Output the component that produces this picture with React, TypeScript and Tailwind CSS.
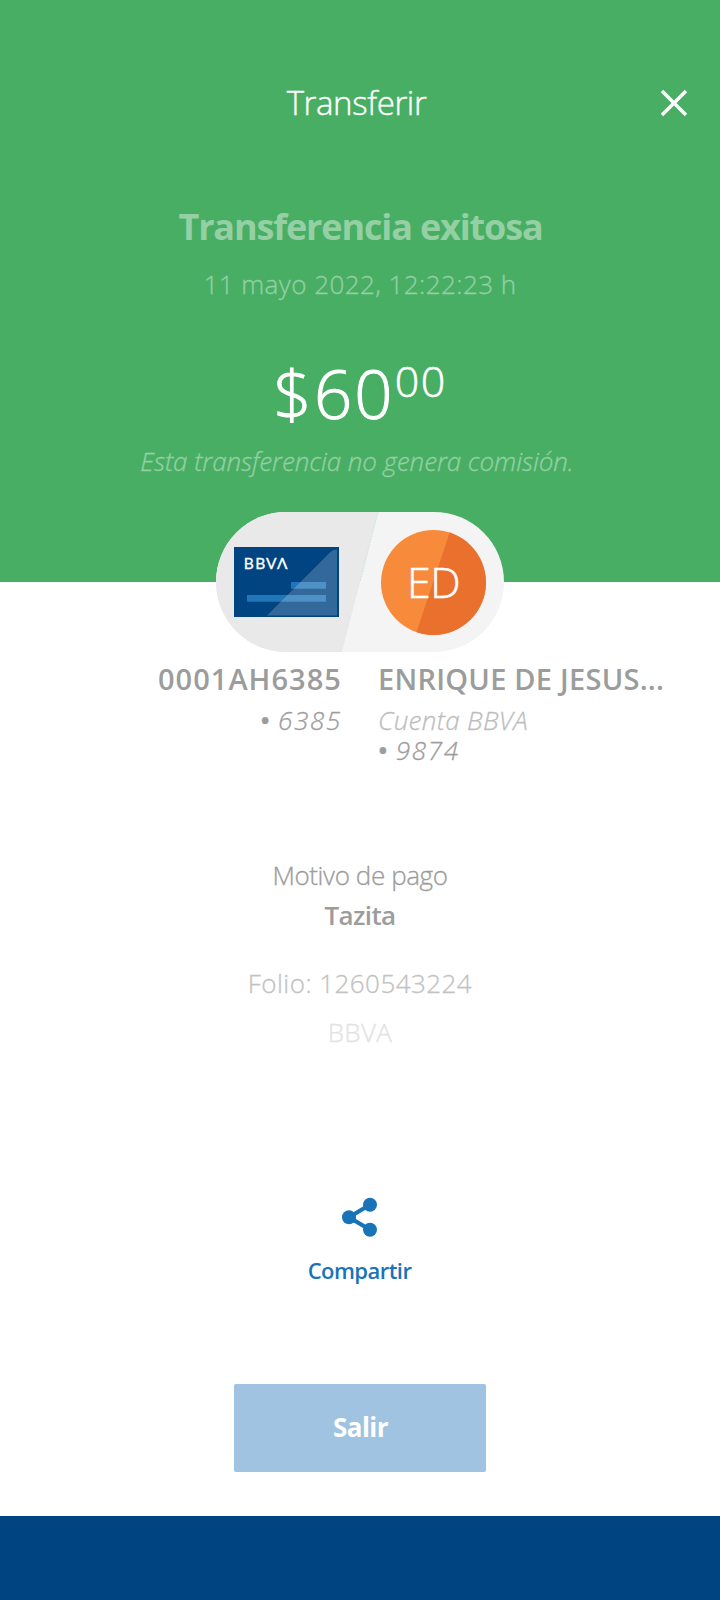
import React from "react";

function CloseIcon() {
  return (
    <svg width="28" height="28" viewBox="0 0 28 28" fill="none" stroke="#fff" strokeWidth="3.4">
      <path d="M2 2 26 26M26 2 2 26" />
    </svg>
  );
}

function BankCard() {
  return (
    <svg width="105" height="70" viewBox="0 0 105 70">
      <rect width="105" height="70" fill="#004481" />
      <rect x="57" y="35" width="35" height="7" fill="#2176b9" />
      <rect x="57" y="41" width="35" height="1" fill="#1a66a3" />
      <rect x="13" y="48" width="79" height="7" fill="#2176b9" />
      <rect x="13" y="54" width="79" height="1" fill="#1a66a3" />
      <path d="M33 68.500 97.500 4Q99.500 2.500 103 2.500V68.500Z" fill="#fff" fillOpacity="0.2" />
      <text x="9.700 21.200 32 43" y="22" fill="#fff" fontSize="15.5" fontFamily="Lato, sans-serif" fontWeight="400" stroke="#fff" strokeWidth="0.3">
        BBVΛ
      </text>
    </svg>
  );
}

function Avatar() {
  return (
    <div className="relative flex size-[105px] items-center justify-center overflow-hidden rounded-full bg-[#f78b3b]">
      <svg className="absolute inset-0" width="105" height="105" viewBox="0 0 105 105">
        <path d="M69.500 0H105V105H34.500Z" fill="#ea712d" />
      </svg>
      <span className="relative -top-px text-[43px] font-light leading-none tracking-[-0.5px] text-white [-webkit-text-stroke:0.5px]">
        ED
      </span>
    </div>
  );
}

function ShareIcon() {
  return (
    <svg width="36" height="40" viewBox="0 0 36 40" fill="#1973b8">
      <path d="M28 7.800 7 20.300 28 32.800" fill="none" stroke="#1973b8" strokeWidth="4.200" />
      <circle cx="7" cy="20.300" r="7" />
      <circle cx="28" cy="7.800" r="7" />
      <circle cx="28" cy="32.800" r="7" />
    </svg>
  );
}

function MaskedNumber({ digits }: { digits: string }) {
  return (
    <p className="flex items-center text-[26px] font-light italic leading-[31px] tracking-[1.7px] [-webkit-text-stroke:0.3px]">
      <span className="mr-2 font-semibold not-italic tracking-normal">•</span>
      {digits}
    </p>
  );
}

export default function App() {
  return (
    <div className="flex h-[1600px] w-[720px] flex-col overflow-hidden whitespace-nowrap bg-white font-['Open_Sans',sans-serif]">
      <header className="flex h-[582px] shrink-0 flex-col items-center bg-[#48ae64] pt-[82px] text-white">
        <div className="grid h-[41px] w-full grid-cols-[1fr_auto_1fr] items-center">
          <h1 className="col-start-2 mr-[7px] pt-px text-[33px] font-light leading-10 tracking-[-0.4px] [-webkit-text-stroke:0.4px]">
            Transferir
          </h1>
          <button className="mr-8 justify-self-end" aria-label="Cerrar">
            <CloseIcon />
          </button>
        </div>
        <h2 className="mt-[80px] ml-px h-12 text-[36px] font-bold leading-[48px] tracking-[-1.15px] text-[#95d0a4]">
          Transferencia exitosa
        </h2>
        <p className="mt-[17px] h-8 text-[26px] font-light leading-8 tracking-[0.45px] text-[#95d0a4] [-webkit-text-stroke:0.3px]">
          11 mayo 2022, 12:22:23 h
        </p>
        <div className="mt-[54px] flex h-20 items-start font-light">
          <span className="text-[67px] leading-[78px] tracking-[2.2px] [-webkit-text-stroke:1px]">$60</span>
          <span className="pt-[6px] text-[43px] leading-[42px] tracking-[1.3px] [-webkit-text-stroke:0.6px]">00</span>
        </div>
        <p className="mt-[11px] mr-1.5 h-8 text-[26px] font-light italic leading-8 tracking-[-0.08px] text-[#95d0a4] [-webkit-text-stroke:0.3px]">
          Esta transferencia no genera comisión.
        </p>
      </header>

      <main className="flex flex-1 flex-col items-center">
        <div className="relative z-10 -mt-[70px] flex h-[140px] w-72 shrink-0 items-center justify-between overflow-hidden rounded-full bg-[#f4f4f4] px-[18px]">
          <svg className="absolute inset-0" width="288" height="140" viewBox="0 0 288 140">
            <path d="M0 0H162L126 140H0Z" fill="#e9e9e9" />
            <path d="M162 0 144 70" stroke="#c6e4cf" strokeWidth="0.8" strokeDasharray="2 1" />
          </svg>
          <div className="relative">
            <BankCard />
          </div>
          <Avatar />
        </div>

        <section className="mt-[9px] grid w-full grid-cols-[342px_1fr] gap-x-[36px] text-[#9c9c9c]">
          <div className="flex flex-col items-end">
            <p className="text-[29px] font-semibold leading-9 tracking-[1.05px]">0001AH6385</p>
            <div className="mt-2">
              <MaskedNumber digits="6385" />
            </div>
          </div>
          <div>
            <p className="text-[29px] font-semibold leading-9 tracking-[0.25px]">ENRIQUE DE JESUS...</p>
            <p className="mt-2 text-[26px] font-light italic leading-[30px] tracking-[0.3px] text-[#bdbdbd] [-webkit-text-stroke:0.3px]">
              Cuenta BBVA
            </p>
            <MaskedNumber digits="9874" />
          </div>
        </section>

        <section className="mt-[91px] flex flex-col items-center text-[26px] leading-9">
          <p className="font-light tracking-[-0.4px] text-[#9c9c9c] [-webkit-text-stroke:0.3px]">Motivo de pago</p>
          <p className="mt-1 font-semibold tracking-[-0.6px] text-[#9c9c9c]">Tazita</p>
          <p className="mt-8 font-light tracking-[0.45px] text-[#c2c2c2] [-webkit-text-stroke:0.3px]">Folio: 1260543224</p>
          <p className="mt-[13px] font-light tracking-[0.3px] text-[#e3e3e3] [-webkit-text-stroke:0.3px]">BBVA</p>
        </section>

        <button className="mt-[147px] flex flex-col items-center text-[#1973b8]">
          <ShareIcon />
          <span className="mt-[18px] mr-px text-[22px] font-semibold leading-[30px] tracking-[-0.55px]">Compartir</span>
        </button>

        <button className="mt-[99px] h-[88px] w-[252px] shrink-0 rounded-[2px] bg-[#a0c3e1] pb-0.5 pl-px text-[26px] font-bold tracking-[-0.5px] text-white">
          Salir
        </button>
      </main>

      <footer className="h-[84px] shrink-0 bg-[#004481]" />
    </div>
  );
}
